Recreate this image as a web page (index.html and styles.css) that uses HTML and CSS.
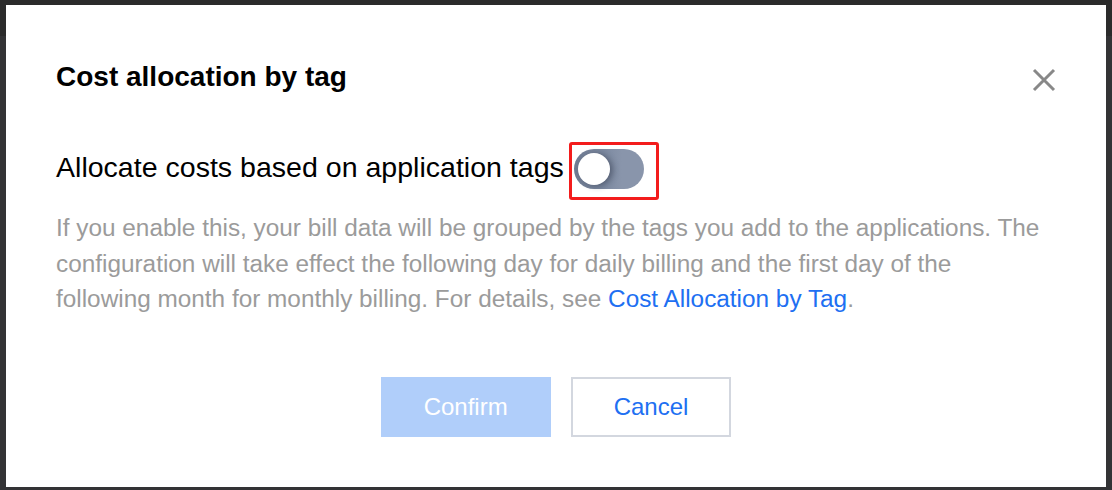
FILE: index.html
```html
<!DOCTYPE html>
<html lang="en">
<head>
<meta charset="utf-8">
<title>Cost allocation by tag</title>
<link rel="stylesheet" href="styles.css">
</head>
<body>
<div class="dialog">
  <div class="header">
    <h1 class="title">Cost allocation by tag</h1>
    <button class="close" aria-label="Close">
      <svg width="24" height="24" viewBox="0 0 24 24"><path d="M2 2L22 22M22 2L2 22" stroke="#888" stroke-width="3" fill="none"/></svg>
    </button>
  </div>
  <div class="row">
    <span class="label">Allocate costs based on application tags</span>
    <span class="switch-wrap">
      <span class="switch"><span class="knob"></span></span>
      <span class="highlight"></span>
    </span>
  </div>
  <p class="desc">If you enable this, your bill data will be grouped by the tags you add to the applications. The configuration will take effect the following day for daily billing and the first day of the following month for monthly billing. For details, see <a class="link" href="#">Cost Allocation by Tag</a>.</p>
  <div class="actions">
    <button class="btn btn-primary">Confirm</button>
    <button class="btn btn-default">Cancel</button>
  </div>
</div>
</body>
</html>
```
FILE: styles.css
```css
html, body {
  margin: 0;
  padding: 0;
}
body {
  width: 1112px;
  height: 490px;
  overflow: hidden;
  background: linear-gradient(#2b2b2b 0, #2b2b2b 36px, #333335 36px);
  font-family: "Liberation Sans", Arial, sans-serif;
}
.dialog {
  box-sizing: border-box;
  margin: 5px 6px 0 6px;
  width: 1100px;
  height: 482px;
  background: #fff;
  padding: 52px 50px 0 50px;
}
.header {
  display: flex;
  justify-content: space-between;
  align-items: flex-start;
}
.title {
  margin: 0;
  font-size: 28px;
  line-height: 40px;
  font-weight: bold;
  color: #000;
}
.close {
  margin: 11px 0 0 0;
  padding: 0;
  border: 0;
  background: none;
  width: 24px;
  height: 24px;
  display: block;
}
.close svg {
  display: block;
}
.row {
  display: flex;
  align-items: flex-start;
  margin-top: 50px;
}
.label {
  font-size: 28.55px;
  line-height: 40px;
  color: #000;
}
.switch-wrap {
  position: relative;
  margin-left: 10px;
  margin-top: 2px;
}
.switch {
  display: block;
  position: relative;
  width: 70px;
  height: 40px;
  border-radius: 20px;
  background: linear-gradient(90deg, #6f7b92 0, #7d8aa1 30px, #8995ab 48px, #8995ab 100%);
}
.knob {
  position: absolute;
  left: 4px;
  top: 4px;
  width: 32px;
  height: 32px;
  border-radius: 50%;
  background: #fff;
  box-shadow: 3px 1px 6px rgba(30, 38, 55, 0.45);
}
.highlight {
  position: absolute;
  left: -5px;
  top: -7px;
  width: 84px;
  height: 52px;
  border: 3px solid #f31c1c;
  border-radius: 3px;
}
.desc {
  margin: 21px 0 0 0;
  max-width: 990px;
  font-size: 24.35px;
  line-height: 35.5px;
  color: #9b9b9b;
}
.link {
  color: #206ff2;
  text-decoration: none;
}
.actions {
  display: flex;
  justify-content: center;
  gap: 20px;
  margin-top: 60px;
}
.btn {
  box-sizing: border-box;
  height: 60px;
  padding: 0 41px;
  border: 2px solid transparent;
  font-family: "Liberation Sans", Arial, sans-serif;
  font-size: 24px;
  line-height: 56px;
  border-radius: 0;
}
.btn-primary {
  background: #b0cefa;
  border-color: #b0cefa;
  color: #fff;
}
.btn-default {
  background: #fff;
  border-color: #d3d7df;
  color: #206ff2;
}
```
